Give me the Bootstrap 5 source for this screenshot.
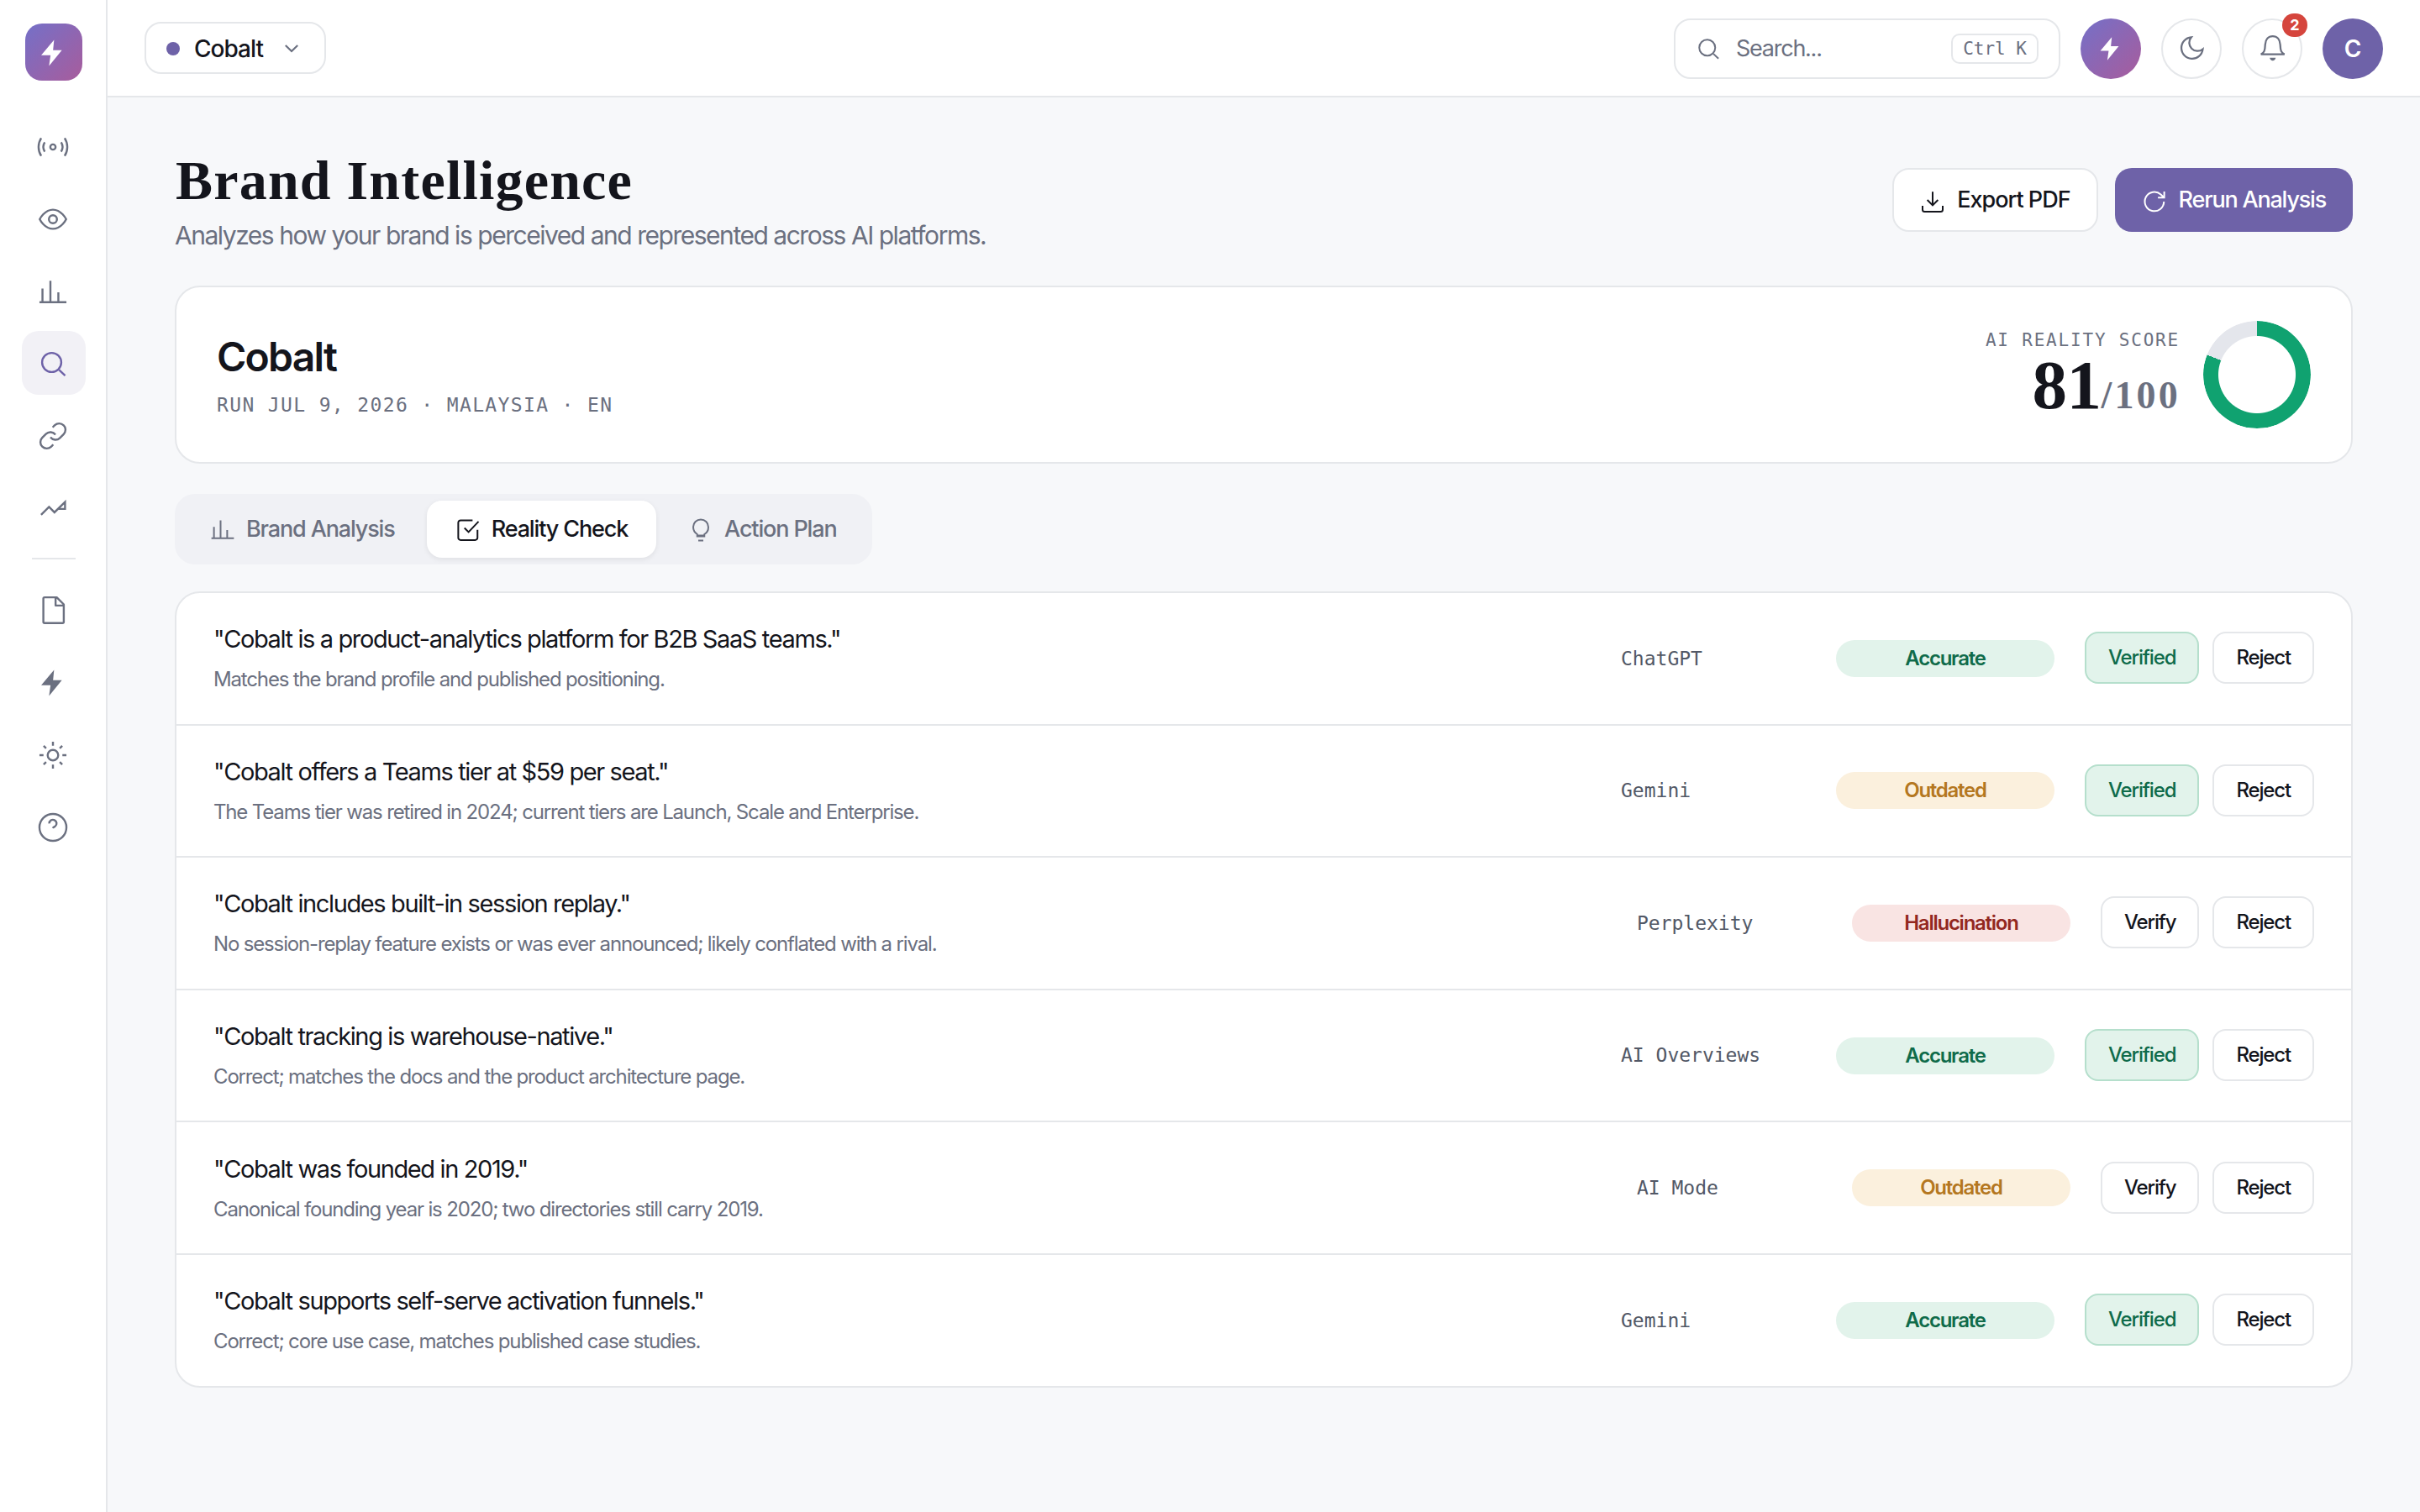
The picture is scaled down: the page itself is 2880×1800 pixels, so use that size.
<!DOCTYPE html>
<html lang="en">
<head>
    <meta charset="UTF-8">
    <meta name="viewport" content="width=device-width, initial-scale=1.0">
    <title>Brand Intelligence</title>
    <link href="https://cdn.jsdelivr.net/npm/bootstrap@5.3.0/dist/css/bootstrap.min.css" rel="stylesheet">
    <style>
        :root {
            --ink: #14151c;
            --muted: #6b7080;
            --line: #e5e7ea;
            --brand: #6e62a8;
        }
        body { font-family: Inter, "Liberation Sans", sans-serif; font-size: 27px; letter-spacing: -1.1px; color: var(--ink); background: #f7f8fa; }
        .mono { font-family: "DejaVu Sans Mono", "Liberation Mono", monospace; letter-spacing: 0; }
        .serif { font-family: "Liberation Serif", "DejaVu Serif", serif; font-weight: 700; }
        .line-box { border: 2px solid var(--line); background: #fff; }
        svg { fill: none; stroke: currentColor; stroke-width: 1.6; overflow: visible; flex: none; display: block; }
        svg .solid { fill: currentColor; stroke: none; }
        .grad { background: linear-gradient(135deg, #7470c8, #a85c9c); color: #fff; }

        .sidebar { width: 128px; border-right: 2px solid var(--line); padding: 28px 0 0 26px; color: var(--muted); }
        .logo { width: 68px; height: 68px; border-radius: 20px; margin: 0 0 40px 4px; }
        .side-item { width: 76px; height: 76px; border-radius: 20px; margin-bottom: 10px; color: inherit; }
        .side-item svg, .logo svg { width: 36px; height: 36px; margin: 2px 2px 0 0; }
        .side-item.active { background: #f2f1f6; color: var(--brand); }
        .side-rule { width: 52px; height: 2px; background: var(--line); margin: 22px 0 22px 12px; }

        .topbar { height: 116px; border-bottom: 2px solid var(--line); padding: 2px 44px 0; }
        .brand-pick { height: 62px; width: 216px; border-radius: 20px; padding: 2px 31px 0 24px; margin-top: -2px; font-weight: 500; font-size: 28px; letter-spacing: -1px; }
        .brand-dot { width: 16px; height: 16px; border-radius: 50%; background: var(--brand); margin-right: 17px; }
        .chevron { stroke-width: 2.2; color: var(--muted); }
        .search-box { width: 460px; height: 72px; border-radius: 20px; padding: 0 24px; color: var(--muted); letter-spacing: -1.25px; }
        .search-box .hint { margin-left: 18px; }
        .key-hint { height: 36px; line-height: 32px; border-radius: 10px; padding: 0 12px; font-size: 21px; }
        .round-btn { width: 72px; height: 72px; border-radius: 50%; color: var(--muted); }
        .round-btn.grad { color: #fff; }
        .round-btn.avatar { background: var(--brand); color: #fff; font-weight: 600; font-size: 28px; letter-spacing: 0; }
        .count { top: -8px; right: -8px; width: 30px; height: 28px; border-radius: 14px; background: #d5453d; color: #fff; font-size: 18px; font-weight: 700; line-height: 28px; letter-spacing: 0; }

        .page { padding: 63px 80px 0; }
        .page h1 { font-size: 66px; line-height: 72px; letter-spacing: 1.2px; margin: 0 0 9px 1px; }
        .page-sub { font-size: 30px; line-height: 40px; letter-spacing: -1.47px; color: var(--muted); }
        .page-acts { gap: 20px; margin-top: 21px; }
        .act { height: 76px; border-radius: 20px; padding: 1px 31px 0; gap: 14px; font-weight: 500; letter-spacing: -1px; }
        .act-main { background: var(--brand); color: #fff; padding: 1px 32px 0; letter-spacing: -1.2px; }

        .panel { border-radius: 30px; }
        .score-card { height: 212px; margin-top: 40px; padding: 0 48px; }
        .score-name { font-size: 48px; font-weight: 600; line-height: 60px; letter-spacing: -1.75px; }
        .run-info { font-size: 23px; letter-spacing: 1.36px; line-height: 32px; color: var(--muted); margin-top: 11px; }
        .score-side { gap: 28px; }
        .score-text { padding-top: 10px; }
        .score-label { font-size: 21px; letter-spacing: 1.8px; line-height: 26px; color: var(--muted); }
        .score-num { font-size: 83px; line-height: 80px; letter-spacing: -.5px; margin-right: -1px; }
        .score-num .outof { font-size: 46px; letter-spacing: 3.2px; color: var(--muted); }
        .ring { width: 128px; height: 128px; border-radius: 50%; -webkit-mask: radial-gradient(circle, transparent 45.5px, #000 46.5px); mask: radial-gradient(circle, transparent 45.5px, #000 46.5px); }

        .tabs { margin: 36px 0 32px; padding: 8px; gap: 4px; border-radius: 24px; background: #f0f1f5; color: var(--muted); font-weight: 500; letter-spacing: -1.14px; }
        .tab-item { height: 68px; padding: 0 34px; gap: 13px; border-radius: 18px; }
        .tab-item.active { background: #fff; color: var(--ink); box-shadow: 0 2px 6px rgba(20, 21, 28, .08); }

        .claim { height: 157.6px; padding: 0 44px; gap: 36px; border-bottom: 2px solid var(--line); }
        .claim:last-child { border-bottom: 0; height: 156px; }
        .claim-text { font-size: 29px; line-height: 42px; letter-spacing: -1.38px; }
        .claim-note { font-size: 24px; line-height: 36px; margin-top: 9px; letter-spacing: -1.155px; color: var(--muted); }
        .engine { width: 220px; font-size: 23px; color: #525866; }
        .verdict { width: 260px; height: 44px; line-height: 44px; border-radius: 22px; font-size: 24px; font-weight: 600; letter-spacing: -1.25px; }
        .v-ok { background: #e2f3eb; color: #0f6b4a; }
        .v-old { background: #fbf0dd; color: #b4771f; }
        .v-bad { background: #f9e4e3; color: #93281f; }
        .mini { height: 62px; line-height: 58px; padding: 0 26px; margin-top: -1px; border-radius: 16px; font-size: 24px; font-weight: 500; letter-spacing: -1.15px; }
        .mini.on { background: #e2f3eb; border-color: #b5dfcc; color: #0f6b4a; }
    </style>
</head>
<body>
    <div class="d-flex vh-100">
        <nav class="sidebar bg-white flex-shrink-0">
            <div class="logo grad d-flex align-items-center justify-content-center">
                <svg viewBox="0 0 24 24"><path class="solid" d="M12.9 1.6L2.7 13.9h7.4L8.9 22.4 19.1 9.8h-7z"/></svg>
            </div>
            <a class="side-item d-flex align-items-center justify-content-center"><svg viewBox="0 0 24 24"><circle cx="12" cy="12" r="2.1"/><path d="M5.5 8.3c-1.4 2.2-1.4 5.2 0 7.4M18.5 8.3c1.4 2.2 1.4 5.2 0 7.4M2.7 4.9c-2.8 4.3-2.8 9.9 0 14.2M21.3 4.9c2.8 4.3 2.8 9.9 0 14.2"/></svg></a>
            <a class="side-item d-flex align-items-center justify-content-center"><svg viewBox="0 0 24 24" stroke-linejoin="round"><path d="M1.5 12S5.25 4.4 12 4.4 22.5 12 22.5 12 18.75 19.6 12 19.6 1.5 12 1.5 12z"/><circle cx="12" cy="12" r="3.2"/></svg></a>
            <a class="side-item d-flex align-items-center justify-content-center"><svg viewBox="0 0 24 24"><path d="M1.3 20.5h21.4M3.7 20.5V9.7M10 20.5V3.5M16.3 20.5v-7.8"/></svg></a>
            <a class="side-item active d-flex align-items-center justify-content-center"><svg viewBox="0 0 24 24"><circle cx="11" cy="11" r="7.6"/><path d="M16.9 16.9l4.8 4.5"/></svg></a>
            <a class="side-item d-flex align-items-center justify-content-center"><svg viewBox="0 0 24 24"><path d="M10 13a5 5 0 0 0 7.54.54l3-3a5 5 0 0 0-7.07-7.07l-1.72 1.71M14 11a5 5 0 0 0-7.54-.54l-3 3a5 5 0 0 0 7.07 7.07l1.71-1.71"/></svg></a>
            <a class="side-item d-flex align-items-center justify-content-center"><svg viewBox="0 0 24 24"><path d="M2.6 17.3L8.9 11l4.3 4.3 8.4-8.2v5.5h-5.2"/></svg></a>
            <div class="side-rule"></div>
            <a class="side-item d-flex align-items-center justify-content-center"><svg viewBox="0 0 24 24" stroke-linejoin="round"><path d="M15 1.4H5.4a1 1 0 0 0-1 1v18.4a1 1 0 0 0 1 1h14.2a1 1 0 0 0 1-1V7L15 1.4zM14.1 1.6v6.3h6.3"/></svg></a>
            <a class="side-item d-flex align-items-center justify-content-center"><svg viewBox="0 0 24 24"><path class="solid" d="M12.9 1.6L2.7 13.9h7.4L8.9 22.4 19.1 9.8h-7z"/></svg></a>
            <a class="side-item d-flex align-items-center justify-content-center"><svg viewBox="0 0 24 24"><circle cx="12" cy="12" r="4.2"/><path d="M12 1.3v3.2M12 19.5v3.2M1.3 12h3.2M19.5 12h3.2M4.6 4.6l2 2M17.4 17.4l2 2M4.6 19.4l2-2M17.4 6.6l2-2"/></svg></a>
            <a class="side-item d-flex align-items-center justify-content-center"><svg viewBox="0 0 24 24"><circle cx="12" cy="12" r="10.7"/><path d="M9.1 8.9a2.9 2.9 0 1 1 4.7 2.2c-.8.6-1.5.7-1.9 1.5"/></svg></a>
        </nav>

        <div class="flex-grow-1">
            <header class="topbar bg-white d-flex align-items-center">
                <div class="brand-pick line-box d-flex align-items-center">
                    <span class="brand-dot"></span>Cobalt
                    <svg class="chevron ms-auto" width="16" height="10" viewBox="0 0 16 10"><path d="M.8 1l7.2 7 7.2-7"/></svg>
                </div>
                <div class="d-flex align-items-center gap-4 ms-auto">
                    <div class="search-box line-box d-flex align-items-center">
                        <svg width="30" height="30" viewBox="0 0 24 24"><circle cx="11" cy="11" r="7.6"/><path d="M16.9 16.9l4.8 4.5"/></svg>
                        <span class="hint">Search...</span>
                        <span class="key-hint mono line-box ms-auto">Ctrl K</span>
                    </div>
                    <div class="round-btn grad d-flex align-items-center justify-content-center"><svg width="32" height="32" viewBox="0 0 24 24"><path class="solid" d="M12.9 1.6L2.7 13.9h7.4L8.9 22.4 19.1 9.8h-7z"/></svg></div>
                    <div class="round-btn line-box d-flex align-items-center justify-content-center"><svg width="34" height="34" viewBox="0 0 24 24"><path d="M21.5 12.4A9 9 0 1 1 11.8 2.4 7 7 0 0 0 21.5 12.4z"/></svg></div>
                    <div class="round-btn line-box position-relative d-flex align-items-center justify-content-center">
                        <svg width="34" height="34" viewBox="0 0 24 24"><path d="M2.6 16.6c2.8-1.2 3.4-3 3.6-8.1.2-4.4 2.6-7 6.3-7s6.1 2.6 6.3 7c.2 5.1.8 6.9 3.6 8.1z"/><path class="solid" d="M10 19.6h5c-.4 3.2-4.6 3.2-5 0z"/></svg>
                        <span class="count position-absolute text-center">2</span>
                    </div>
                    <div class="round-btn avatar d-flex align-items-center justify-content-center">C</div>
                </div>
            </header>

            <main class="page">
                <div class="d-flex align-items-start justify-content-between">
                    <div>
                        <h1 class="serif">Brand Intelligence</h1>
                        <div class="page-sub">Analyzes how your brand is perceived and represented across AI platforms.</div>
                    </div>
                    <div class="page-acts d-flex">
                        <div class="act line-box d-flex align-items-center"><svg width="30" height="30" viewBox="0 0 24 24"><path d="M12 3.4v13M6.9 11.2l5.1 5.1 5.1-5.1M2.4 16.8v3.6a2 2 0 0 0 2 2h15.2a2 2 0 0 0 2-2v-3.6"/></svg>Export PDF</div>
                        <div class="act act-main d-flex align-items-center"><svg width="30" height="30" viewBox="0 0 24 24"><path d="M21 12.8a9.1 9.1 0 1 1-3-6.8l3.2 3M21.3 3.2V9h-6"/></svg>Rerun Analysis</div>
                    </div>
                </div>

                <section class="score-card panel line-box d-flex align-items-center justify-content-between">
                    <div>
                        <div class="score-name">Cobalt</div>
                        <div class="run-info mono">RUN JUL 9, 2026 · MALAYSIA · EN</div>
                    </div>
                    <div class="score-side d-flex align-items-center">
                        <div class="score-text text-end">
                            <div class="score-label mono">AI REALITY SCORE</div>
                            <div class="score-num serif">81<span class="outof">/100</span></div>
                        </div>
                        <div class="ring" style="background:conic-gradient(#10a270 81%, #e4e6ec 0)"></div>
                    </div>
                </section>

                <div class="tabs d-inline-flex">
                    <div class="tab-item d-flex align-items-center"><svg width="30" height="30" viewBox="0 0 24 24"><path d="M1.3 20.5h21.4M3.7 20.5V9.7M10 20.5V3.5M16.3 20.5v-7.8"/></svg>Brand Analysis</div>
                    <div class="tab-item active d-flex align-items-center"><svg width="30" height="30" viewBox="0 0 24 24"><path d="M16.3 3.6H4.9a2.2 2.2 0 0 0-2.2 2.2v14.3a2.2 2.2 0 0 0 2.2 2.2h13.9a2.2 2.2 0 0 0 2.2-2.2v-7.6M8.6 10.8l3.9 3.9 9.5-10"/></svg>Reality Check</div>
                    <div class="tab-item d-flex align-items-center"><svg width="30" height="30" viewBox="0 0 24 24"><path d="M8.6 18.8v-2C6.2 15.4 4.8 12.8 4.8 9.9a7.2 7.2 0 0 1 14.4 0c0 2.9-1.4 5.5-3.8 6.9v2zM8.6 18h6.8M9.6 22.8h4.8"/></svg>Action Plan</div>
                </div>

                <section class="panel line-box" id="claims"></section>
            </main>
        </div>
    </div>

    <script src="https://cdn.jsdelivr.net/npm/bootstrap@5.3.0/dist/js/bootstrap.bundle.min.js"></script>
    <script>
        const claims = [
            { text: '"Cobalt is a product-analytics platform for B2B SaaS teams."', note: "Matches the brand profile and published positioning.", engine: "ChatGPT", verdict: "Accurate", verified: true },
            { text: '"Cobalt offers a Teams tier at $59 per seat."', note: "The Teams tier was retired in 2024; current tiers are Launch, Scale and Enterprise.", engine: "Gemini", verdict: "Outdated", verified: true },
            { text: '"Cobalt includes built-in session replay."', note: "No session-replay feature exists or was ever announced; likely conflated with a rival.", engine: "Perplexity", verdict: "Hallucination", verified: false },
            { text: '"Cobalt tracking is warehouse-native."', note: "Correct; matches the docs and the product architecture page.", engine: "AI Overviews", verdict: "Accurate", verified: true },
            { text: '"Cobalt was founded in 2019."', note: "Canonical founding year is 2020; two directories still carry 2019.", engine: "AI Mode", verdict: "Outdated", verified: false },
            { text: '"Cobalt supports self-serve activation funnels."', note: "Correct; core use case, matches published case studies.", engine: "Gemini", verdict: "Accurate", verified: true }
        ];
        const tone = { Accurate: "v-ok", Outdated: "v-old", Hallucination: "v-bad" };

        document.getElementById("claims").innerHTML = claims.map(c => `
            <div class="claim d-flex align-items-center">
                <div class="flex-grow-1">
                    <div class="claim-text">${c.text}</div>
                    <div class="claim-note">${c.note}</div>
                </div>
                <div class="engine mono">${c.engine}</div>
                <div class="verdict text-center ${tone[c.verdict]}">${c.verdict}</div>
                <div class="d-flex gap-3">
                    <div class="mini line-box ${c.verified ? "on" : ""}">${c.verified ? "Verified" : "Verify"}</div>
                    <div class="mini line-box">Reject</div>
                </div>
            </div>
        `).join("");
    </script>
</body>
</html>
